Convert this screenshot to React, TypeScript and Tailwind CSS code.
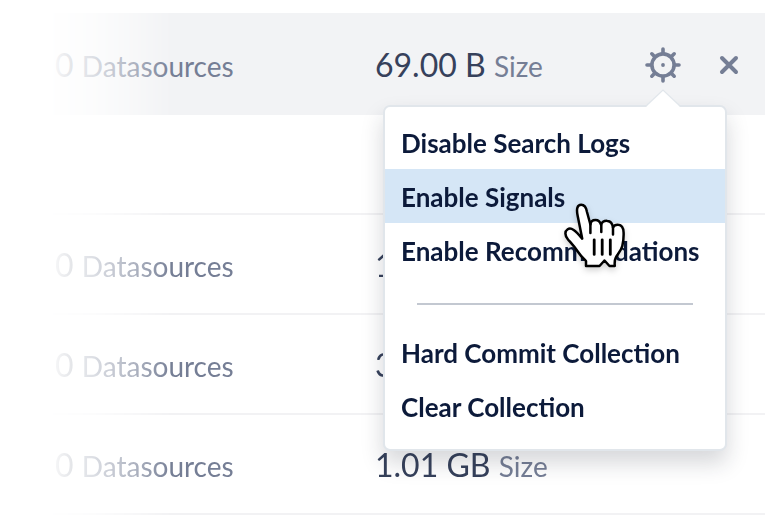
type Row = { datasources?: string; size?: string; unit?: string; height: string; shade: string };

const rows: Row[] = [
  { datasources: "0", size: "69.00 B", unit: "Size", height: "h-[102px]", shade: "bg-[#f2f3f5]" },
  { height: "h-[100px]", shade: "border-b-2 border-[#f2f2f4]" },
  { datasources: "0", size: "1", height: "h-[100px]", shade: "border-b-2 border-[#f2f2f4]" },
  { datasources: "0", size: "3", height: "h-[100px]", shade: "border-b-2 border-[#f2f2f4]" },
  { datasources: "0", size: "1.01 GB", unit: "Size", height: "h-[100px]", shade: "border-b-2 border-[#f2f2f4]" },
];

function Metric({ value, label }: { value: string; label?: string }) {
  return (
    <div className="whitespace-nowrap text-[32px] leading-[39px] text-[#36415b]">
      {value} {label && <span className="text-[28px] leading-none text-[#757e95]">{label}</span>}
    </div>
  );
}

function GearIcon() {
  return (
    <svg width="36" height="36" viewBox="-18 -18 36 36" fill="none" stroke="#757e95" strokeWidth="3.6" strokeLinecap="round">
      <circle r="11.1" />
      <circle r="1.9" fill="#757e95" stroke="none" />
      <path d="M0-12v-4M0 12v4M-12 0h-4M12 0h4M-8.5-8.5l-2.7-2.7M8.5-8.5l2.7-2.7M-8.5 8.5l-2.7 2.7M8.5 8.5l2.7 2.7" />
    </svg>
  );
}

function CloseIcon() {
  return (
    <svg width="20" height="20" viewBox="0 0 20 20" fill="none" stroke="#757e95" strokeWidth="4" strokeLinecap="round">
      <path d="M3 3l14 14M17 3L3 17" />
    </svg>
  );
}

function HandCursor() {
  return (
    <svg
      className="absolute left-[560px] top-[190px] drop-shadow-[0_3px_3px_rgba(0,0,0,0.18)]"
      width="80"
      height="90"
      viewBox="0 0 80 90"
      fill="#fff"
      stroke="#000"
      strokeWidth="2.5"
      strokeLinejoin="round"
      strokeLinecap="round"
    >
      <path d="M22.2 48.6L17.6 25.5C16.2 18.8 17.3 14.8 21.2 14.8C24.5 14.8 26.3 18 27 22L30.4 34.5C30.7 31.2 33 30 35.5 30C38.8 30 40.4 32.5 41 34.8C42 31.8 44.6 30.7 47.4 30.9C50.5 31 52.5 33.8 53 37.5C54 35.5 56 34.6 58.3 34.8C61.8 35 63.4 38 63.6 42.5C63.8 48 63.5 51 62.3 56C61 61 57.5 64.5 55.8 67.5C54.5 70 54.5 73 54.8 76H49.5L44.5 70.5L39.5 76H26V71C23.7 68.5 21.3 66.8 18.5 62.5C14.5 56.5 11.5 53.5 8 49.5C4.6 45.6 4.6 41.2 7.7 39.2C11.3 37 15.2 40.2 22.2 48.6Z" />
      <path d="M30.4 34v9M41.3 35v7M53 37.5v7" />
      <path d="M34.2 49.8v14.6M42.2 49.8v14.6M50.3 49.8v14.6" strokeWidth="2.8" />
    </svg>
  );
}

function MenuItem({ label, active }: { label: string; active?: boolean }) {
  return (
    <li className={`flex h-[54px] items-center whitespace-nowrap px-4 pt-0.5 ${active ? "bg-[#d5e6f6]" : ""}`}>
      {label}
    </li>
  );
}

function ActionMenu() {
  return (
    <div className="absolute left-[383px] top-[105px] w-[344px] rounded-[7px] border-2 border-[#e1e6eb] bg-white pt-2 pb-4 text-[26px] font-bold leading-[32px] text-[#0c1a3a] shadow-[0_12px_22px_rgba(25,35,50,0.18)]">
      <svg className="absolute left-[260px] -top-[18px]" width="36" height="21" viewBox="0 0 36 21">
        <path d="M1.5 17L18 1L34.5 17V21H1.5Z" fill="#fff" />
        <path d="M1 17L18 1L35 17" fill="none" stroke="#e1e6eb" strokeWidth="1.2" />
      </svg>
      <ul className="relative">
        <MenuItem label="Disable Search Logs" />
        <MenuItem label="Enable Signals" active />
        <MenuItem label="Enable Recommendations" />
      </ul>
      <hr className="mx-8 mt-[26px] mb-5 border-0 border-t-2 border-[#c3c8d1]" />
      <ul>
        <MenuItem label="Hard Commit Collection" />
        <MenuItem label="Clear Collection" />
      </ul>
    </div>
  );
}

export default function App() {
  return (
    <main className="relative h-[528px] w-[765px] overflow-hidden bg-white pt-[13px] font-['Lato',sans-serif]">
      <div className="[mask-image:linear-gradient(to_right,transparent_46px,rgba(0,0,0,0.24)_92px,rgba(0,0,0,0.6)_136px,black_172px)]">
        {rows.map((row, i) => (
          <section key={i} className={`flex items-center pt-px ${row.height} ${row.shade}`}>
            <div className="w-[375px] shrink-0 pl-[55px]">
              {row.datasources && <Metric value={row.datasources} label="Datasources" />}
            </div>
            <div className="w-[270px] shrink-0">{row.size && <Metric value={row.size} label={row.unit} />}</div>
            {i === 0 && (
              <div className="flex items-center gap-[38px] pt-px">
                <GearIcon />
                <CloseIcon />
              </div>
            )}
          </section>
        ))}
      </div>
      <ActionMenu />
      <HandCursor />
    </main>
  );
}
